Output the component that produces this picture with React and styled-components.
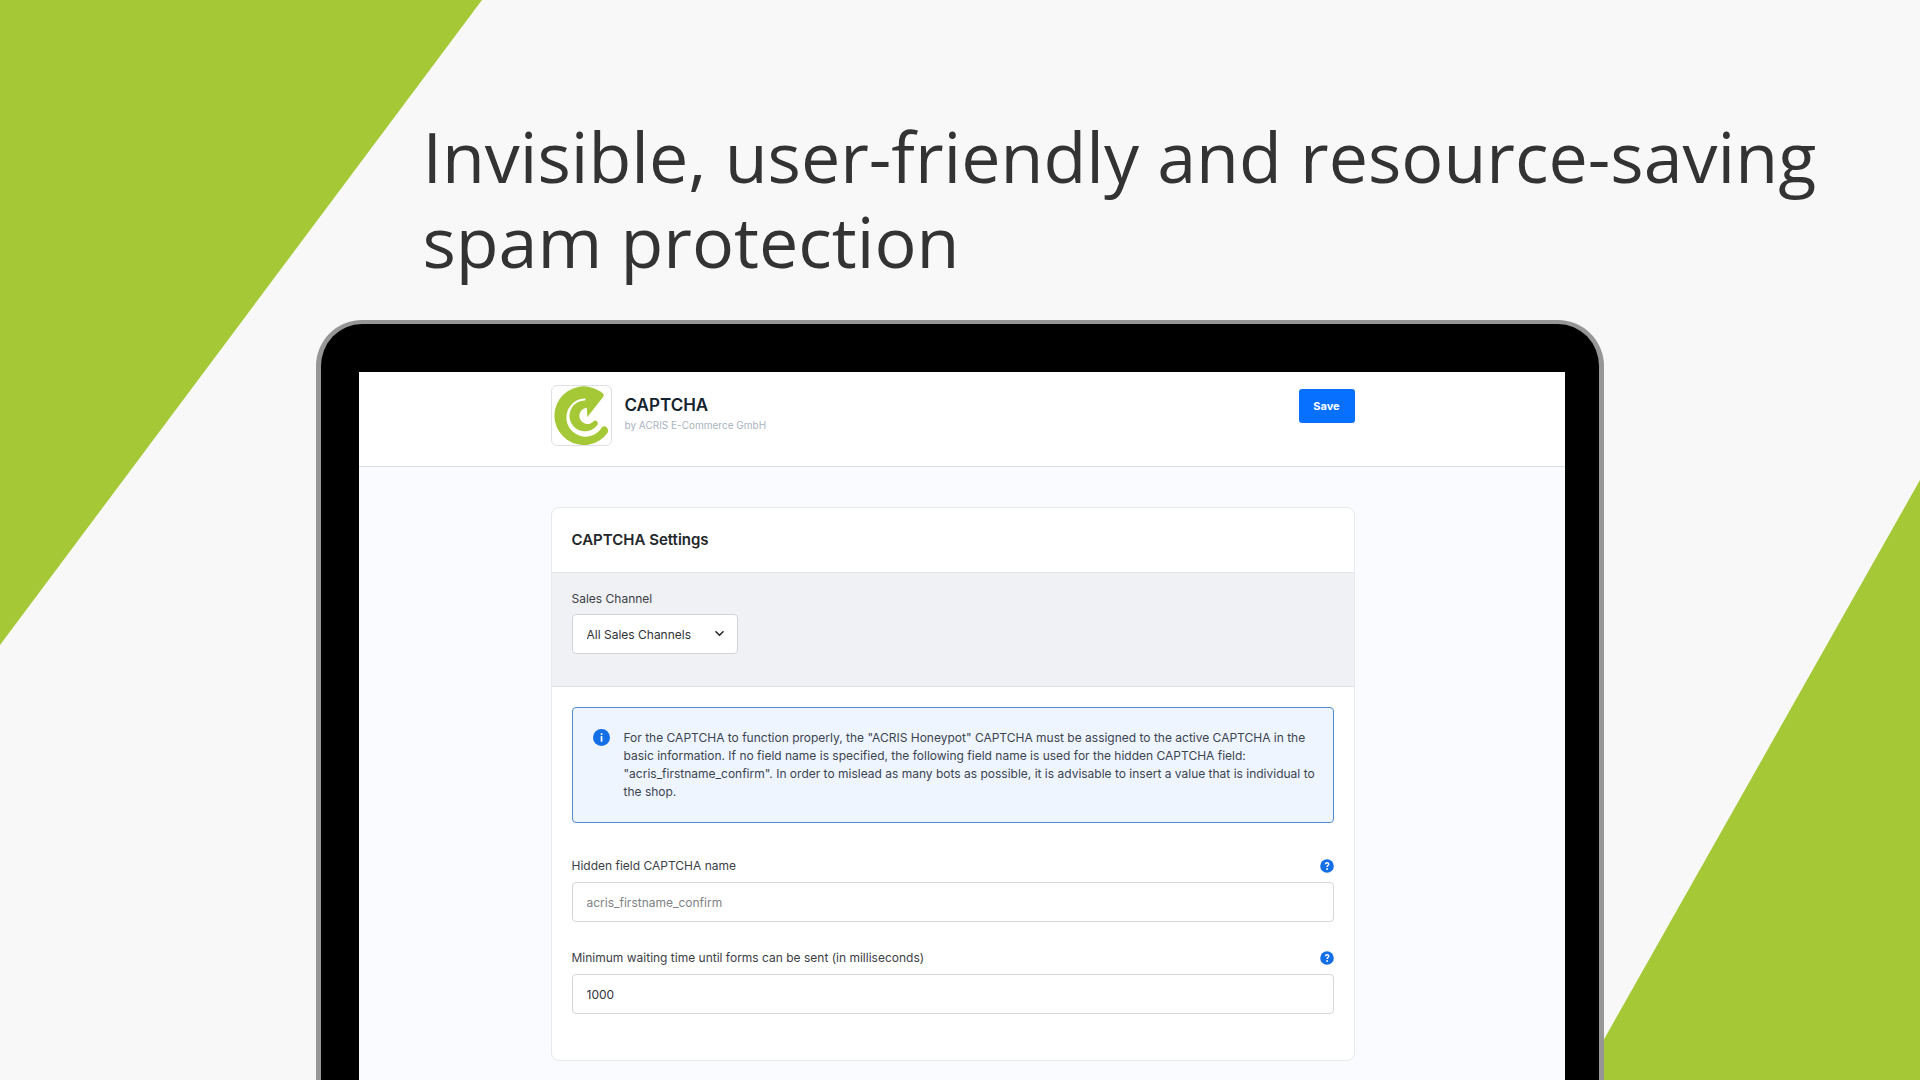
import React from 'react';
import styled, { createGlobalStyle } from 'styled-components';

const GlobalStyle = createGlobalStyle`
  *, *::before, *::after {
    box-sizing: border-box;
  }

  body {
    margin: 0;
    background-color: #f8f8f8;
  }
`;

const Page = styled.div`
  position: relative;
  display: flex;
  flex-direction: column;
  min-height: 100vh;
  overflow: hidden;
  font-family: Inter, 'Liberation Sans', sans-serif;
`;

const Backdrop = styled.svg`
  position: absolute;
  top: 0;
  left: 0;
  width: 100%;
  height: 100%;
  z-index: -1;
`;

const Headline = styled.h1`
  margin: 0;
  padding: 114px 60px 36px 22%;
  color: #333333;
  font-family: 'Open Sans', 'Noto Sans', sans-serif;
  font-size: 70px;
  font-weight: 400;
  line-height: 85px;
`;

const Device = styled.div`
  display: flex;
  flex: 1;
  width: 90%;
  max-width: 1288px;
  margin: 0 auto;
  padding: 48px 34px 0 38px;
  background-color: #000000;
  border: 5px solid #969696;
  border-top-width: 4px;
  border-bottom: 0;
  border-radius: 46px 46px 0 0;
`;

const Screen = styled.div`
  flex: 1;
  padding-bottom: 16px;
  background-color: #f9fbff;
`;

const TopBar = styled.header`
  padding: 13px 19px 20px 0;
  background-color: #ffffff;
  border-bottom: 1px solid #d8dde6;
`;

const Inner = styled.div`
  display: flex;
  align-items: flex-start;
  width: 90%;
  max-width: 804px;
  margin: 0 auto;
`;

const LogoBox = styled.div`
  width: 61px;
  height: 61px;
  border: 1px solid #dfe1e6;
  border-radius: 6px;

  svg {
    display: block;
    width: 100%;
    height: 100%;
  }
`;

const Titles = styled.div`
  flex: 1;
  padding: 9px 0 0 13px;
`;

const Title = styled.h2`
  margin: 0;
  color: #14232f;
  font-size: 17px;
  font-weight: 600;
  line-height: 22px;
`;

const Author = styled.p`
  margin: 0;
  color: #a9b3c0;
  font-size: 10px;
  font-weight: 400;
  line-height: 18px;
`;

const SaveButton = styled.button`
  width: 56px;
  height: 34px;
  margin-top: 4px;
  padding: 0;
  background-color: #0870ff;
  border: 0;
  border-radius: 3px;
  color: #ffffff;
  font-family: inherit;
  font-size: 11px;
  font-weight: 700;
`;

const Content = styled.main`
  padding: 40px 19px 0 0;
`;

const Card = styled.section`
  width: 90%;
  max-width: 804px;
  margin: 0 auto;
  background-color: #ffffff;
  border: 1px solid #e6e8ec;
  border-radius: 8px;
`;

const CardTitle = styled.h3`
  margin: 0;
  padding: 20px;
  color: #22262a;
  font-size: 15px;
  font-weight: 600;
  line-height: 24px;
`;

const ChannelBar = styled.div`
  padding: 18px 20px 32px;
  background-color: #f0f1f4;
  border-top: 1px solid #e2e4e8;
  border-bottom: 1px solid #dcdfe4;
`;

const Label = styled.label`
  display: block;
  color: #3c4046;
  font-size: 12px;
  line-height: 16px;
`;

const SelectWrap = styled.div`
  position: relative;
  width: 166px;
  margin-top: 7px;

  svg {
    position: absolute;
    top: 15px;
    right: 14px;
    pointer-events: none;
  }
`;

const Select = styled.select`
  display: block;
  width: 100%;
  height: 40px;
  padding: 0 14px;
  appearance: none;
  background-color: #ffffff;
  border: 1px solid #d1d3d8;
  border-radius: 4px;
  color: #303338;
  font-family: inherit;
  font-size: 12px;
`;

const CardBody = styled.div`
  padding: 20px 20px 18px;
`;

const Banner = styled.div`
  display: flex;
  align-items: flex-start;
  gap: 14px;
  padding: 21px 10px 21px 20px;
  margin-bottom: 35px;
  background-color: #eef5ff;
  border: 1px solid #4f8cd2;
  border-radius: 4px;
`;

const BannerText = styled.p`
  flex: 1;
  margin: 0;
  color: #3c4450;
  font-size: 12px;
  line-height: 18px;
`;

const Field = styled.div`
  margin-bottom: 28px;
`;

const FieldHead = styled.div`
  display: flex;
  align-items: center;
  justify-content: space-between;
  margin-bottom: 8px;
`;

const HelpButton = styled.button`
  display: flex;
  padding: 0;
  background: none;
  border: 0;
`;

const Input = styled.input`
  display: block;
  width: 100%;
  height: 40px;
  padding: 0 14px;
  background-color: #ffffff;
  border: 1px solid #d5d6d9;
  border-radius: 4px;
  color: #303338;
  font-family: inherit;
  font-size: 12px;

  &::placeholder {
    color: #808285;
    opacity: 1;
  }
`;

const Logo = () => (
  <svg viewBox="1 1 58 58" aria-hidden="true">
    <path
      fill="#a5c836"
      d="M48.2 6.2 A28.8 28.8 0 1 0 56 46.4 Q56.8 43.6 54.4 41.4 Q52 39.6 50 41.8 A18.8 18.8 0 1 1 33.2 13.2 Q34.6 13.6 33.6 15.2 A15.2 15.2 0 1 0 45.6 39.4 Q46.8 37.2 44.8 35.4 Q43 34.4 41.6 36 A8 8 0 1 1 35.2 22.4 L35.8 31.4 L51.4 11.6 Q52.4 9.6 51 8.2 Z"
    />
  </svg>
);

const InfoIcon = () => (
  <svg width="17" height="17" viewBox="0 0 17 17" aria-hidden="true">
    <circle cx="8.5" cy="8.5" r="8.5" fill="#146ee6" />
    <rect x="7.7" y="4.2" width="1.7" height="1.7" fill="#ffffff" />
    <rect x="7.7" y="7.1" width="1.7" height="5.6" fill="#ffffff" />
  </svg>
);

const HelpIcon = () => (
  <svg width="14" height="14" viewBox="0 0 14 14" aria-hidden="true">
    <circle cx="7" cy="7" r="6.8" fill="#146ee6" />
    <path
      d="M5.4 5.2 C5.5 3.2 8.8 3.3 8.7 5.2 C8.7 6.4 7.1 6.5 7.1 8"
      fill="none"
      stroke="#ffffff"
      strokeWidth="1.4"
    />
    <circle cx="7.1" cy="10" r="0.9" fill="#ffffff" />
  </svg>
);

const Chevron = () => (
  <svg width="9" height="9" viewBox="0 0 9 9" aria-hidden="true">
    <path
      d="M1 2.8 L4.5 6.3 L8 2.8"
      fill="none"
      stroke="#24282d"
      strokeWidth="1.6"
      strokeLinecap="round"
      strokeLinejoin="round"
    />
  </svg>
);

const TextField = ({ id, label, ...rest }) => {
  return (
    <Field>
      <FieldHead>
        <Label htmlFor={id}>{label}</Label>
        <HelpButton type="button" aria-label={`Help: ${label}`}>
          <HelpIcon />
        </HelpButton>
      </FieldHead>
      <Input id={id} type="text" {...rest} />
    </Field>
  );
};

const App = () => {
  return (
    <>
      <GlobalStyle />
      <Page>
        <Backdrop viewBox="0 0 1920 1080" preserveAspectRatio="none" aria-hidden="true">
          <polygon points="0,0 482,0 0,645" fill="#a5c836" />
          <polygon points="1920,480 1920,1080 1581,1080" fill="#a5c836" />
        </Backdrop>
        <Headline>Invisible, user-friendly and resource-saving spam protection</Headline>
        <Device>
          <Screen>
            <TopBar>
              <Inner>
                <LogoBox>
                  <Logo />
                </LogoBox>
                <Titles>
                  <Title>CAPTCHA</Title>
                  <Author>by ACRIS E-Commerce GmbH</Author>
                </Titles>
                <SaveButton type="button">Save</SaveButton>
              </Inner>
            </TopBar>
            <Content>
              <Card>
                <CardTitle>CAPTCHA Settings</CardTitle>
                <ChannelBar>
                  <Label htmlFor="sales-channel">Sales Channel</Label>
                  <SelectWrap>
                    <Select id="sales-channel">
                      <option>All Sales Channels</option>
                    </Select>
                    <Chevron />
                  </SelectWrap>
                </ChannelBar>
                <CardBody>
                  <Banner>
                    <InfoIcon />
                    <BannerText>
                      For the CAPTCHA to function properly, the "ACRIS Honeypot" CAPTCHA must be
                      assigned to the active CAPTCHA in the basic information. If no field name is
                      specified, the following field name is used for the hidden CAPTCHA field:
                      "acris_firstname_confirm". In order to mislead as many bots as possible, it is
                      advisable to insert a value that is individual to the shop.
                    </BannerText>
                  </Banner>
                  <TextField
                    id="field-name"
                    label="Hidden field CAPTCHA name"
                    placeholder="acris_firstname_confirm"
                  />
                  <TextField
                    id="waiting-time"
                    label="Minimum waiting time until forms can be sent (in milliseconds)"
                    defaultValue="1000"
                  />
                </CardBody>
              </Card>
            </Content>
          </Screen>
        </Device>
      </Page>
    </>
  );
};

export default App;
